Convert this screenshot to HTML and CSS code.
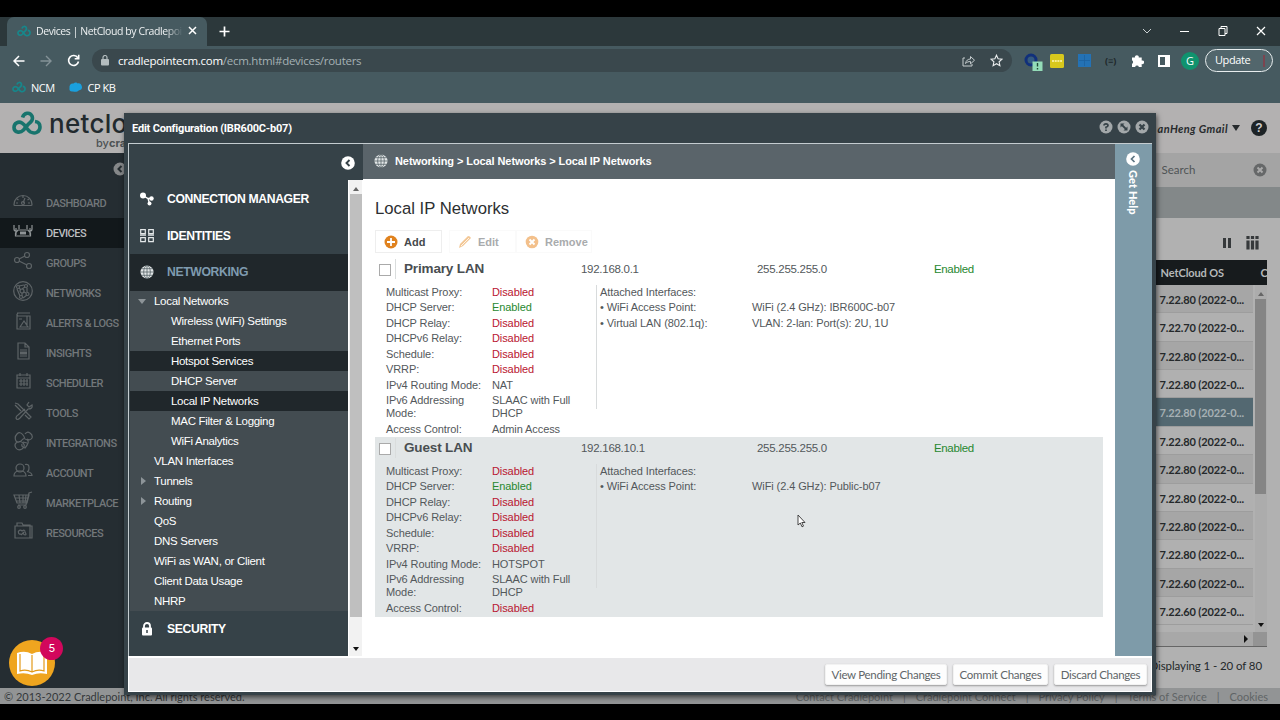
FILE: index.html
```html
<!DOCTYPE html>
<html lang="en">
<head>
    <meta charset="utf-8">
    <title>Devices | NetCloud by Cradlepoint</title>
    <link rel="stylesheet" href="styles.css">
</head>
<body>
    <svg class="defs" width="0" height="0">
        <symbol id="cloud" viewBox="0 0 30 24">
            <path d="M10.500 6.500C12 1.500 18 .8 20 5c1.500 4-1 6-4 8.500L11.500 19C8 22.500 2 21.500 2 16.500c0-4.500 4.500-6.500 8-4.500 4 2.500 5 7 8.500 9 4.500 2.300 9.500 0 9.500-5 0-3-2-5.200-5-5.500" fill="none" stroke="currentColor" stroke-width="3.600"/>
        </symbol>
        <symbol id="globe" viewBox="0 0 14 14">
            <circle cx="7" cy="7" r="6.500" fill="#e2e6e7"/>
            <path d="M7 0v14M.5 7h13M1.500 3.700h11M1.500 10.300h11" stroke="#59656a" stroke-width=".8"/>
            <ellipse cx="7" cy="7" rx="3.300" ry="6.500" fill="none" stroke="#59656a" stroke-width=".8"/>
        </symbol>
    </svg>

    <div class="tabbar">
        <div class="tab">
            <svg class="fav" width="14" height="12"><use href="#cloud"/></svg>
            <span class="tab-title">Devices | NetCloud by Cradlepoi</span>
            <svg width="9" height="9"><path d="M1 1l7 7M8 1l-7 7" stroke="#fff" stroke-width="1.500"/></svg>
        </div>
        <svg class="plus" width="11" height="11"><path d="M5.500 .5v10M.5 5.500h10" stroke="#fff" stroke-width="1.700"/></svg>
        <div class="window-buttons">
            <svg width="10" height="10"><path d="M1 3l4 4 4-4" fill="none" stroke="#c9d0d2"/></svg>
            <svg width="10" height="10"><path d="M0 5.500h9" stroke="#fff"/></svg>
            <svg width="10" height="10"><path d="M1 2.500h6v7h-6zM3 2.500v-2h6v7h-2" fill="none" stroke="#fff"/></svg>
            <svg width="10" height="10"><path d="M1 1l8 8M9 1l-8 8" stroke="#fff" stroke-width="1.200"/></svg>
        </div>
    </div>

    <div class="toolbar">
        <svg width="12" height="12"><path d="M11.500 6H1M6 1L1 6l5 5" fill="none" stroke="#fff" stroke-width="1.500"/></svg>
        <svg width="12" height="12"><path d="M.5 6H11M6 1l5 5-5 5" fill="none" stroke="#849297" stroke-width="1.400"/></svg>
        <svg width="13" height="13"><path d="M10.800 3.700A5 5 0 1 0 11.500 7.500M11.700 .8v4h-4" fill="none" stroke="#fff" stroke-width="1.600"/></svg>
        <div class="address">
            <svg width="8" height="11"><rect y="4" width="8" height="6.500" rx="1" fill="#b4bdbf"/><path d="M2 4.500v-2a2 2 0 0 1 4 0v2" fill="none" stroke="#b4bdbf" stroke-width="1.200"/></svg>
            <span class="url">cradlepointecm.com<span>/ecm.html#devices/routers</span></span>
            <svg class="share" width="14" height="12"><path d="M3 3H1v8h9V9M3.500 8.500c.5-3 2.500-4.500 5-4.500V1.500l4 3.700-4 3.700V6.500c-2 0-3.500.5-5 2z" fill="none" stroke="#c5ccce"/></svg>
            <svg class="star" width="13" height="13"><path d="M6.500 1.200l1.600 3.600 3.900.4-2.900 2.600.8 3.900-3.400-2-3.400 2 .8-3.900L1 5.200l3.900-.4z" fill="none" stroke="#e9eced" stroke-width="1.100"/></svg>
        </div>
        <div class="extensions">
            <svg class="onetab" width="20" height="20"><circle cx="8" cy="9" r="5" fill="none" stroke="#10307c" stroke-width="3"/><circle cx="8" cy="9" r="3" fill="#315a85"/><rect x="9.500" y="10.500" width="10" height="9.500" fill="#93dcb8"/><path d="M14.500 12v3.500M14.500 17v1.400" stroke="#214a36" stroke-width="1.400"/></svg>
            <svg width="14" height="14"><rect width="14" height="14" rx="1.500" fill="#d8c81d"/><path d="M2 7h10" stroke="#fff8b8" stroke-width="1.600" stroke-dasharray="2 .7"/></svg>
            <svg width="13" height="13"><rect width="13" height="13" fill="#2472b5"/><path d="M6.500 1v11M1 6.500h11" stroke="#1d62a0" stroke-width=".8"/></svg>
            <span class="code-ext">(≡)</span>
            <svg width="13" height="13"><path d="M1 3.500h3a1.900 1.900 0 1 1 3.700 0h3v3a1.900 1.900 0 1 1 0 3.600v2.900H7.900a2 2 0 0 0-3.800 0H1V9.900a2 2 0 0 0 0-3.600z" fill="#fff"/></svg>
            <svg width="12" height="12"><rect x="1" y="1" width="10" height="10" fill="none" stroke="#fff" stroke-width="2"/><path d="M8.500 1v10" stroke="#fff" stroke-width="3"/></svg>
            <span class="avatar">G</span>
            <span class="update">Update<i></i></span>
        </div>
    </div>

    <div class="bookmarks">
        <svg class="fav" width="14" height="12"><use href="#cloud"/></svg><span>NCM</span>
        <svg class="salesforce" width="14" height="10"><path d="M4 9.500C1 10 0 8 .5 6 0 3 2 1 4.500 1.500 6 0 8 .5 8.500 1.500c2-.8 4 .5 4.200 2.500 1 2-.5 4.500-2.700 4.200C8.500 10 6 10 4 9.500z" fill="#1aa0de"/></svg><span>CP KB</span>
    </div>

    <div class="app">
        <header>
            <svg class="logo" width="30" height="24"><use href="#cloud"/></svg>
            <div class="brand">netclo<small>by<b>cra</b></small></div>
            <span class="account">anHeng Gmail</span>
            <i class="caret"></i>
            <span class="help">?</span>
        </header>

        <div class="page">
            <nav>
                <svg class="collapse" width="14" height="14"><circle cx="7" cy="7" r="6.500" fill="#858789"/><path d="M8.500 4L5.500 7l3 3" fill="none" stroke="#252c30" stroke-width="2"/></svg>
                <ul>
                    <li><svg width="20" height="20"><path d="M1 13.500a9 9 0 0 1 18 0q0 1-1 1H2q-1 0-1-1zM10 5v2M4 8l1.500 1M16 8l-1.500 1M3 12h2M15 12h2M10 12l2-5"/><circle cx="10" cy="12" r="1.500"/></svg>DASHBOARD</li>
                    <li class="active"><svg width="20" height="20"><path d="M5 9h10l2.500 3v3h-15v-3zM3 14V7M1 4v4q0 2 2 2M17 14V7M19 4v4q0 2-2 2M6 4v4M14 4v4"/><path d="M7 12h6" stroke-width="3"/></svg>DEVICES</li>
                    <li><svg width="20" height="20"><circle cx="4" cy="9" r="2.500"/><circle cx="14" cy="4" r="2.500"/><circle cx="16" cy="15" r="2.500"/><path d="M6 8l6-3M6 10l8 4"/></svg>GROUPS</li>
                    <li><svg width="20" height="20"><circle cx="10" cy="10" r="9.300"/><circle cx="9" cy="10" r="2"/><circle cx="13" cy="5" r="1.500"/><circle cx="14.500" cy="13" r="1.500"/><circle cx="5" cy="6" r="1.500"/><circle cx="8" cy="16" r="1.500"/><path d="M9 8l3-2M11 11l2 1M6 7l2 2M9 12v3M10 17l4-3M6 5l5-1M14 7v4M4 8l3 7"/></svg>NETWORKS</li>
                    <li><svg width="20" height="20"><path d="M4 2h13M5 2q-2 2 0 3h12v13H4V3M14 5v10M7 16l4-6 4 6zM6 8h3"/></svg>ALERTS &amp; LOGS</li>
                    <li><svg width="20" height="20"><path d="M5 2h7l4 4v12H5zM12 2v4h4M7 9h7M7 15h7"/><path d="M7 12h7" stroke-width="3"/></svg>INSIGHTS</li>
                    <li><svg width="20" height="20"><path d="M4 4h13v13H4zM4 7h13M7 2v3M14 2v3M6 10h9M6 13h9M8 8v7M11 8v7M14 8v7"/></svg>SCHEDULER</li>
                    <li><svg width="20" height="20"><path d="M2 2l3 1 10 10M14 12l4 4-2 2-4-4M16 1l-2 3 2 2 3-2q1 4-4 4l-8 9q-3 3-4 0 0-2 2-3l7-6M2 4l6 6"/></svg>TOOLS</li>
                    <li><svg width="20" height="20"><path d="M4 3q3-3 6 1t0 4q-4 5-7 2-2-4 1-7zM3 12q4-3 7 0t-1 6q-4 2-6-1t0-5zM12 8q4 1 3 4t-3 5q-4-1-3-4M12 3q2-3 5-1t2 5q-2 3-5 1M10 11l4 1"/></svg>INTEGRATIONS</li>
                    <li><svg width="20" height="20"><circle cx="7" cy="7" r="4"/><path d="M1 15q0-4 4-5h4q4 1 4 5zM12 3.500q4-1 4 3t-2 4q5 1 5 4h-4"/></svg>ACCOUNT</li>
                    <li><svg width="20" height="20"><path d="M1 4h15l-2 8H4zM19 1l-3 1-3 12H5M2 7h13M3 10h12M6 4l1 8M10 4v8M13 4l-1 8"/><circle cx="6" cy="16" r="1.300"/><circle cx="12" cy="16" r="1.300"/></svg>MARKETPLACE</li>
                    <li><svg width="20" height="20"><path d="M2 5h17v12H2zM4 5V2h5l1 2h7v13"/><path d="M8 13a2 2 0 1 1 1-3q3-2 3 1 2 3 0 3-1 0-2-2M8 14l3-3"/></svg>RESOURCES</li>
                </ul>
                <div class="guide">
                    <svg width="32" height="26"><path d="M1 3q8-3 15 1 7-4 15-1v21q-8-2-15 1-7-3-15-1z" fill="#fff"/><path d="M4 4v17q6-2 12 1 6-3 12-1V4M16 5v17" fill="none" stroke="#e39a19" stroke-width="1.200"/></svg>
                    <span class="badge">5</span>
                </div>
            </nav>

            <main>
                <div class="search">Search<svg width="14" height="14"><circle cx="7" cy="7" r="6.500" fill="#666869"/><path d="M4.500 4.500l5 5M9.500 4.500l-5 5" stroke="#aaa" stroke-width="2"/></svg></div>
                <div class="band"></div>
                <div class="grid-tools">
                    <svg width="10" height="10"><path d="M2.500 0v10M7.500 0v10" stroke="#36393b" stroke-width="3"/></svg>
                    <svg width="13" height="14"><path d="M2 0v3M6.500 0v3M11 0v3M2 4.500v9M6.500 4.500v9M11 4.500v9" stroke="#36393b" stroke-width="3.200"/></svg>
                </div>
                <div class="grid">
                    <div class="grid-head"><span>NetCloud OS</span><span>C</span></div>
                    <div class="grid-body">
                        <div class="rows">
                            <div>7.22.80 (2022-0...</div>
                            <div>7.22.70 (2022-0...</div>
                            <div>7.22.80 (2022-0...</div>
                            <div>7.22.80 (2022-0...</div>
                            <div class="selected">7.22.80 (2022-0...</div>
                            <div>7.22.80 (2022-0...</div>
                            <div>7.22.80 (2022-0...</div>
                            <div>7.22.80 (2022-0...</div>
                            <div>7.22.80 (2022-0...</div>
                            <div>7.22.80 (2022-0...</div>
                            <div>7.22.60 (2022-0...</div>
                            <div>7.22.60 (2022-0...</div>
                        </div>
                        <div class="vscroll"><i class="up"></i><b></b><i class="down"></i></div>
                    </div>
                    <div class="hscroll"><i></i><b></b></div>
                </div>
                <div class="paging">Displaying 1 - 20 of 80</div>
            </main>
        </div>

        <footer>
            <span class="copyright">© 2013-2022 Cradlepoint, Inc. All rights reserved.</span>
            <span>Contact Cradlepoint</span><i>|</i><span>Cradlepoint Connect</span><i>|</i><span>Privacy Policy</span><i>|</i><span>Terms of Service</span><i>|</i><span>Cookies</span>
        </footer>

        <div class="modal">
            <div class="modal-title">
                <span>Edit Configuration (IBR600C-b07)</span>
                <svg width="14" height="14"><circle cx="7" cy="7" r="6.500" fill="#a3a8aa"/><path d="M5 5.500Q5 3.800 7 3.800t2 1.700Q9 6.700 7 7.200v1.300M7 9.500v1.500" fill="none" stroke="#364248" stroke-width="1.700"/></svg>
                <svg width="14" height="14"><circle cx="7" cy="7" r="6.500" fill="#a3a8aa"/><path d="M4.500 4.500l5 5" stroke="#364248" stroke-width="1.800"/><path d="M3.500 7.500v-4h4zM10.500 6.500v4h-4z" fill="#364248"/></svg>
                <svg width="14" height="14"><circle cx="7" cy="7" r="6.500" fill="#a3a8aa"/><path d="M4.500 4.500l5 5M9.500 4.500l-5 5" stroke="#364248" stroke-width="2.200"/></svg>
            </div>

            <div class="modal-body">
                <div class="menu">
                    <div class="menu-top"><svg width="14" height="14"><circle cx="7" cy="7" r="6.800" fill="#fff"/><path d="M8.500 4L5.500 7l3 3" fill="none" stroke="#364248" stroke-width="1.900"/></svg></div>
                    <div class="menu-scroll">
                        <div class="menu-list">
                            <div class="group"><svg width="14" height="14"><circle cx="3" cy="3.500" r="3" fill="#fff"/><circle cx="11.500" cy="6.500" r="2.200" fill="#fff"/><circle cx="9.500" cy="11.500" r="2" fill="#fff"/><path d="M3 3.500l5 3h3.500M8 6.500l1.500 5" fill="none" stroke="#fff" stroke-width="1.400"/></svg>CONNECTION MANAGER</div>
                            <div class="group"><svg width="14" height="14"><path d="M.7.700h4.600v4H.7zM8.700.700h4.600v4H8.700zM.7 8.700h4.600v4H.7zM8.700 8.700h4.600v4H8.700zM0 6.200h6M8 6.200h6" fill="none" stroke="#e4e8e9" stroke-width="1.200"/></svg>IDENTITIES</div>
                            <div class="group open"><svg width="14" height="14"><use href="#globe"/></svg>NETWORKING</div>
                            <ul>
                                <li class="expanded">Local Networks</li>
                                <li class="sub">Wireless (WiFi) Settings</li>
                                <li class="sub">Ethernet Ports</li>
                                <li class="sub current">Hotspot Services</li>
                                <li class="sub">DHCP Server</li>
                                <li class="sub current">Local IP Networks</li>
                                <li class="sub">MAC Filter &amp; Logging</li>
                                <li class="sub">WiFi Analytics</li>
                                <li>VLAN Interfaces</li>
                                <li class="collapsed">Tunnels</li>
                                <li class="collapsed">Routing</li>
                                <li>QoS</li>
                                <li>DNS Servers</li>
                                <li>WiFi as WAN, or Client</li>
                                <li>Client Data Usage</li>
                                <li>NHRP</li>
                            </ul>
                            <div class="group"><svg width="14" height="14"><rect x="2" y="5.500" width="10" height="8" rx="1" fill="#fff"/><path d="M4 6V4a3 3 0 0 1 6 0v2" fill="none" stroke="#fff" stroke-width="1.800"/><path d="M7 8v3" stroke="#364248" stroke-width="1.500"/></svg>SECURITY</div>
                        </div>
                        <div class="menu-bar"><i class="up"></i><b></b><i class="down"></i></div>
                    </div>
                </div>

                <div class="content">
                    <div class="breadcrumb"><svg width="14" height="14"><use href="#globe"/></svg>Networking &gt; Local Networks &gt; Local IP Networks</div>
                    <div class="panel">
                        <h1>Local IP Networks</h1>
                        <div class="actions">
                            <div class="action add"><svg width="14" height="14"><circle cx="7" cy="7" r="6.500" fill="#e0821e"/><path d="M7 3v8M3 7h8" stroke="#fff" stroke-width="1.800"/></svg>Add</div>
                            <div class="action edit"><svg width="14" height="14"><path d="M1 13l1-4 8-8q2 0 3 2l-8 8z" fill="#f3c795"/><path d="M3 11l8-8" stroke="#fff" stroke-width=".8"/></svg>Edit</div>
                            <div class="action remove"><svg width="14" height="14"><circle cx="7" cy="7" r="6.300" fill="#f3c08b"/><path d="M4.500 4.500l5 5M9.500 4.500l-5 5" stroke="#fff" stroke-width="1.900"/></svg>Remove</div>
                        </div>

                        <div class="network">
                            <div class="network-head"><input type="checkbox"><strong>Primary LAN</strong><span>192.168.0.1</span><span>255.255.255.0</span><span class="on">Enabled</span></div>
                            <div class="details">
                                <dl>
                                    <dt>Multicast Proxy:</dt><dd class="off">Disabled</dd>
                                    <dt>DHCP Server:</dt><dd class="on">Enabled</dd>
                                    <dt>DHCP Relay:</dt><dd class="off">Disabled</dd>
                                    <dt>DHCPv6 Relay:</dt><dd class="off">Disabled</dd>
                                    <dt>Schedule:</dt><dd class="off">Disabled</dd>
                                    <dt>VRRP:</dt><dd class="off">Disabled</dd>
                                    <dt>IPv4 Routing Mode:</dt><dd>NAT</dd>
                                    <dt>IPv6 Addressing<br>Mode:</dt><dd>SLAAC with Full<br>DHCP</dd>
                                    <dt>Access Control:</dt><dd>Admin Access</dd>
                                </dl>
                                <dl class="attached">
                                    <dt>Attached Interfaces:</dt><dd></dd>
                                    <dt>• WiFi Access Point:</dt><dd>WiFi (2.4 GHz): IBR600C-b07</dd>
                                    <dt>• Virtual LAN (802.1q):</dt><dd>VLAN: 2-lan: Port(s): 2U, 1U</dd>
                                </dl>
                            </div>
                        </div>

                        <div class="network alt">
                            <div class="network-head"><input type="checkbox"><strong>Guest LAN</strong><span>192.168.10.1</span><span>255.255.255.0</span><span class="on">Enabled</span></div>
                            <div class="details">
                                <dl>
                                    <dt>Multicast Proxy:</dt><dd class="off">Disabled</dd>
                                    <dt>DHCP Server:</dt><dd class="on">Enabled</dd>
                                    <dt>DHCP Relay:</dt><dd class="off">Disabled</dd>
                                    <dt>DHCPv6 Relay:</dt><dd class="off">Disabled</dd>
                                    <dt>Schedule:</dt><dd class="off">Disabled</dd>
                                    <dt>VRRP:</dt><dd class="off">Disabled</dd>
                                    <dt>IPv4 Routing Mode:</dt><dd>HOTSPOT</dd>
                                    <dt>IPv6 Addressing<br>Mode:</dt><dd>SLAAC with Full<br>DHCP</dd>
                                    <dt>Access Control:</dt><dd class="off">Disabled</dd>
                                </dl>
                                <dl class="attached">
                                    <dt>Attached Interfaces:</dt><dd></dd>
                                    <dt>• WiFi Access Point:</dt><dd>WiFi (2.4 GHz): Public-b07</dd>
                                </dl>
                            </div>
                        </div>
                    </div>
                </div>

                <div class="get-help"><svg width="14" height="14"><circle cx="7" cy="7" r="6.800" fill="#fff"/><path d="M8.500 4L5.500 7l3 3" fill="none" stroke="#5c7482" stroke-width="1.700"/></svg><span>Get Help</span></div>
            </div>

            <div class="modal-footer">
                <button class="b1">View Pending Changes</button>
                <button class="b2">Commit Changes</button>
                <button class="b3">Discard Changes</button>
            </div>
        </div>
    </div>

    <svg class="cursor" width="9" height="14"><path d="M1 1v10l2.300-2 1.700 3.800 1.500-.7-1.700-3.600H8z" fill="#fff" stroke="#333" stroke-width=".9"/></svg>
</body>
</html>
```
FILE: styles.css
```css
* {
    box-sizing: border-box;
}

body {
    margin: 0;
    padding: 17px 0 16px;
    width: 1280px;
    height: 720px;
    overflow: hidden;
    background: #000;
    display: flex;
    flex-direction: column;
    font-family: "Liberation Sans", Arial, sans-serif;
    white-space: nowrap;
}

svg {
    flex: none;
    display: block;
}

ul, dl, dd {
    margin: 0;
    padding: 0;
    list-style: none;
}

.defs {
    position: absolute;
}

/* browser */

.tabbar {
    height: 29px;
    flex: none;
    background: #2c383b;
    display: flex;
    align-items: center;
    padding: 0 0 1px 7px;
    font: 10.500px "Open Sans", sans-serif;
    color: #eef1f2;
}

.tab {
    width: 200px;
    height: 29px;
    margin-bottom: -1px;
    background: #465a60;
    border-radius: 7px 7px 0 0;
    display: flex;
    align-items: center;
    padding: 0 0 2px 10px;
}

.fav {
    color: #17878b;
}

.tab-title {
    width: 147px;
    margin: 0 5px 0 5px;
    letter-spacing: -0.42px;
    mask-image: linear-gradient(90deg, #000 88%, transparent);
}

.plus {
    margin-left: 12px;
}

.window-buttons {
    margin-left: auto;
    padding-right: 14px;
    display: flex;
    gap: 28px;
}

.toolbar {
    height: 30px;
    flex: none;
    background: #465a60;
    display: flex;
    align-items: center;
    gap: 15px;
    padding: 0 0 1px 12px;
}

.toolbar > svg {
    margin-left: 1px;
    margin-right: -1px;
}

.address {
    width: 920px;
    height: 23px;
    margin-left: -2px;
    border-radius: 12px;
    background: #3a484d;
    display: flex;
    align-items: center;
    padding: 0 9px 0 9px;
}

.url {
    flex: 1;
    margin-left: 9px;
    font: 11.500px "Open Sans", sans-serif;
    letter-spacing: -0.27px;
    color: #fff;
}

.url span {
    color: #a5b1b4;
}

.share {
    margin-right: 14px;
}

.extensions {
    display: flex;
    align-items: center;
    gap: 14px;
    margin-left: -4px;
    font: 11px "Open Sans", sans-serif;
}

.onetab {
    margin-right: -7px;
}

.code-ext {
    width: 12px;
    font-size: 9px;
    font-weight: bold;
    color: #1d2629;
}

.avatar {
    width: 18px;
    height: 18px;
    line-height: 18px;
    margin: 0 -8px 0 -3px;
    border-radius: 50%;
    background: #10936e;
    color: #fff;
    text-align: center;
}

.update {
    width: 68px;
    height: 23px;
    line-height: 20px;
    padding-left: 9px;
    border: 1px solid #e8edee;
    border-radius: 12px;
    background: #52666c;
    color: #fff;
    letter-spacing: -0.4px;
    display: flex;
    gap: 13px;
}

.update i {
    width: 2px;
    height: 12px;
    margin-top: 5px;
    background: #7c4550;
}

.bookmarks {
    height: 27px;
    flex: none;
    background: #465a60;
    display: flex;
    align-items: center;
    padding: 0 0 5px 12px;
    font: 11px "Open Sans", sans-serif;
    letter-spacing: -0.5px;
    color: #fff;
}

.bookmarks span {
    margin-left: 5px;
}

.salesforce {
    margin-left: 14px;
}

/* application behind the dialog */

.app {
    flex: 1;
    min-height: 0;
    position: relative;
    display: flex;
    flex-direction: column;
    background: #b1b1b1;
}

header {
    height: 50px;
    flex: none;
    display: flex;
    align-items: center;
    background: #b3b1b1;
    padding-right: 13px;
}

.logo {
    margin-left: 12px;
    margin-top: -10px;
    color: #18746d;
}

.brand {
    margin: 1px 0 0 7px;
    font: 500 26px/29px Inter, sans-serif;
    letter-spacing: 0.3px;
    color: #222a2e;
    display: flex;
    flex-direction: column;
}

.brand small {
    font-size: 11px;
    line-height: 10px;
    letter-spacing: 0;
    margin-left: 47px;
    color: #4d5254;
}

.account {
    margin-left: auto;
    font: italic bold 11px Lato, sans-serif;
    letter-spacing: 0.4px;
    color: #272b2d;
}

.caret {
    margin: 0 11px 0 4px;
    border: 4px solid transparent;
    border-top: 6px solid #272b2d;
    border-bottom: 0;
}

.help {
    width: 16px;
    height: 16px;
    border-radius: 50%;
    background: #1d2326;
    color: #ccc;
    text-align: center;
    font: bold 12px/16px "Liberation Sans", sans-serif;
}

.page {
    flex: 1;
    min-height: 0;
    display: flex;
}

nav {
    width: 128px;
    background: #252d32;
    position: relative;
    font: 500 11px Roboto, sans-serif;
    letter-spacing: -0.5px;
    color: #72777a;
}

.collapse {
    margin: 9px 0 12px 113px;
}

nav li {
    height: 30px;
    display: flex;
    align-items: center;
    gap: 13px;
    padding-left: 13px;
}

nav li svg {
    fill: none;
    stroke: #5e6467;
    stroke-width: 1.200;
    margin-top: -4px;
}

nav li.active {
    background: #12181b;
    color: #bcbfc0;
}

nav li.active svg {
    stroke: #8f9496;
}

.guide {
    position: absolute;
    left: 9px;
    bottom: 2px;
    width: 46px;
    height: 46px;
    border-radius: 50%;
    background: #efa51f;
    display: flex;
    align-items: center;
    justify-content: center;
}

.badge {
    position: absolute;
    left: 31px;
    top: -3px;
    width: 23px;
    height: 23px;
    border-radius: 50%;
    background: #d2075c;
    color: #fff;
    font: 11px/22px Inter, sans-serif;
    text-align: center;
}

main {
    flex: 1;
    padding-left: 1022px;
    font-family: Lato, sans-serif;
    color: #25292b;
}

.search {
    height: 34px;
    background: #a4a4a4;
    margin-left: 6px;
    padding: 0 13px 1px 6px;
    display: flex;
    align-items: center;
    justify-content: space-between;
    font-size: 11.500px;
    color: #505456;
}

.band {
    height: 31px;
    background: #838889;
}

.grid-tools {
    height: 42px;
    display: flex;
    align-items: center;
    justify-content: flex-end;
    gap: 14px;
    padding: 8px 21px 0 0;
}

.grid {
    width: 117px;
    border-bottom: 1px solid #666;
}

.grid-head {
    height: 25px;
    background: #171b1d;
    color: #b5b8b9;
    font-size: 11px;
    font-weight: bold;
    letter-spacing: -0.1px;
    display: flex;
    justify-content: space-between;
    align-items: center;
    padding: 0 0 1px 11px;
    overflow: hidden;
}

.grid-head span:last-child {
    width: 6px;
}

.grid-body {
    display: flex;
    justify-content: space-between;
    height: 347px;
}

.rows {
    width: 103px;
}

.rows div {
    height: 28.360px;
    line-height: 29px;
    padding-left: 10px;
    border-bottom: 1px solid #9d9d9d;
    background: #b0b0b0;
    font-size: 11px;
    font-weight: bold;
    letter-spacing: -0.13px;
}

.rows div:nth-child(odd) {
    background: #a6a6a6;
}

.rows div.selected {
    background: #536871;
    color: #a6b0b4;
}

.vscroll {
    width: 12px;
    background: #acacac;
    display: flex;
    flex-direction: column;
    align-items: center;
}

.up {
    margin: 7px 0 3px;
    border: 3px solid transparent;
    border-bottom: 4px solid #666;
    border-top: 0;
}

.down {
    margin: auto 0 5px;
    border: 3px solid transparent;
    border-top: 4px solid #111;
    border-bottom: 0;
}

.vscroll b {
    width: 11px;
    height: 195px;
    background: #858585;
}

.hscroll {
    height: 14px;
    background: #a8a8a8;
    display: flex;
    justify-content: flex-end;
    align-items: center;
}

.hscroll i {
    border: 4px solid transparent;
    border-left: 4px solid #111;
    border-right: 0;
    margin-right: 5px;
}

.hscroll b {
    width: 14px;
    height: 14px;
    background: #949494;
}

.paging {
    margin-top: 12px;
    padding-right: 18px;
    text-align: right;
    font-size: 11.500px;
    letter-spacing: -0.1px;
}

footer {
    height: 16px;
    flex: none;
    display: flex;
    align-items: center;
    gap: 10px;
    padding: 1px 12px 0 4px;
    background: #929495;
    font: 11px Lato, sans-serif;
    color: #606466;
}

footer i {
    font-style: normal;
}

.copyright {
    margin-right: auto;
    color: #34383a;
}

/* edit configuration dialog */

.modal {
    position: absolute;
    left: 124px;
    top: 10px;
    width: 1032px;
    height: 582px;
    padding: 0 4px 3px;
    background: #364248;
    box-shadow: 1px 2px 5px rgba(0, 0, 0, 0.6);
    display: flex;
    flex-direction: column;
}

.modal-title {
    height: 30px;
    flex: none;
    display: flex;
    align-items: center;
    gap: 4px;
    padding: 0 3px 2px 4px;
    color: #fff;
    font: bold 11px Roboto, sans-serif;
    letter-spacing: -0.2px;
}

.modal-title span {
    margin: 2px auto 0 0;
}

.modal-body {
    height: 513px;
    flex: none;
    display: flex;
    border: solid #c4ccd0;
    border-width: 1px 2px 0 1px;
    padding-left: 1px;
    background: #364248;
}

.menu {
    width: 233px;
    display: flex;
    flex-direction: column;
}

.menu-top {
    height: 36px;
    flex: none;
    padding: 12px 0 0 211px;
}

.menu-scroll {
    flex: 1;
    min-height: 0;
    display: flex;
}

.menu-list {
    width: 218px;
    overflow: hidden;
    color: #fff;
}

.group {
    height: 37px;
    display: flex;
    align-items: center;
    gap: 13px;
    padding: 1px 0 0 10px;
    font-size: 12.200px;
    font-weight: bold;
    letter-spacing: -0.35px;
}

.group.open {
    background: #20272b;
    color: #7f9bb0;
    padding: 0 0 1px 10px;
}

.menu-list ul {
    background: #434c51;
    margin-bottom: -1px;
}

.menu-list li {
    height: 20px;
    line-height: 20px;
    padding-left: 24px;
    font-size: 11.500px;
    letter-spacing: -0.3px;
    display: flex;
    align-items: center;
}

.menu-list li.sub {
    padding-left: 41px;
}

.menu-list li.current {
    background: #20272b;
}

.menu-list li.expanded::before {
    content: "";
    margin: 0 8px 0 -16px;
    border: 4px solid transparent;
    border-top: 5px solid #8d9498;
    border-bottom: 0;
}

.menu-list li.collapsed::before {
    content: "";
    margin: 0 8px 0 -13px;
    border: 4px solid transparent;
    border-left: 5px solid #8d9498;
    border-right: 0;
}

.menu-bar {
    width: 15px;
    border: solid #fff;
    border-width: 0 1px;
    background: #f2f2f2;
    display: flex;
    flex-direction: column;
    align-items: center;
}

.menu-bar b {
    width: 12px;
    height: 423px;
    background: #bfbfbf;
}

.content {
    flex: 1;
    background: #fff;
}

.breadcrumb {
    height: 35px;
    background: #5a646a;
    color: #fff;
    display: flex;
    align-items: center;
    gap: 7px;
    padding: 0 0 1px 11px;
    font-size: 11px;
    font-weight: bold;
    letter-spacing: -0.09px;
}

.panel {
    padding: 0 12px;
    color: #53585b;
}

h1 {
    margin: 19px 0 0;
    height: 32px;
    font-size: 16.700px;
    line-height: 22px;
    font-weight: normal;
    color: #2c2f31;
}

.actions {
    height: 28px;
    display: flex;
}

.action {
    height: 23px;
    display: flex;
    align-items: center;
    gap: 6px;
    padding-left: 8px;
    font-size: 11px;
    font-weight: bold;
    color: #a9abad;
    border: 1px solid #fafafa;
}

.action.add {
    width: 67px;
    color: #45494c;
    border-color: #eee;
}

.action.edit {
    width: 67px;
    margin-left: 7px;
}

.action.remove {
    width: 76px;
}

.network {
    height: 179px;
    width: 728px;
}

.network.alt {
    height: 180px;
    background: #e2e6e7;
}

.network-head {
    height: 26px;
    display: grid;
    grid-template-columns: 20px 186px 176px 177px 1fr;
    align-items: center;
    padding: 0 0 4px 0;
    font-size: 11.500px;
    letter-spacing: -0.28px;
}

.network-head .on {
    letter-spacing: -0.35px;
}

.network-head input {
    appearance: none;
    width: 12px;
    height: 12px;
    margin: 1px 0 0 4px;
    border: 1px solid #aaa;
    background: #fff;
}

.network-head strong {
    height: 20px;
    border-left: 1px solid #dadddd;
    padding-left: 8px;
    font-size: 13.500px;
    letter-spacing: -0.15px;
    line-height: 19px;
    color: #494e51;
}

.details {
    display: flex;
    padding: 0.5px 0 0 11px;
    font-size: 11px;
    line-height: 13px;
    letter-spacing: -0.09px;
}

dl {
    display: grid;
    grid-template-columns: 106px 105px;
    grid-auto-rows: min-content;
}

dt, dd {
    padding: 1.250px 0;
    min-height: 15.500px;
}

.attached {
    height: 124px;
    margin-left: -1px;
    grid-template-columns: 152px 200px;
    border-left: 1px solid #d8dbdc;
    padding-left: 3px;
}

.on {
    color: #27882f;
}

.off {
    color: #b91530;
}

.get-help {
    width: 37px;
    flex: none;
    background: #7e9ba9;
    padding: 8px 1px 0 0;
    display: flex;
    flex-direction: column;
    align-items: center;
    gap: 4px;
    color: #fff;
    font: 900 11px Lato, sans-serif;
    letter-spacing: 0.1px;
}

.get-help span {
    writing-mode: vertical-rl;
}

.modal-footer {
    flex: 1;
    border: 1px solid #fff;
    border-top-width: 2px;
    background: #e8e8ea;
    display: flex;
    justify-content: flex-end;
    align-items: center;
    gap: 6px;
    padding: 0 4px 0 0;
}

button {
    height: 21px;
    padding: 0;
    border: 1px solid #f2f2f2;
    border-radius: 2px;
    background: #fdfdfd;
    box-shadow: 0 1px 2px rgba(0, 0, 0, 0.35);
    font: 11.500px Lato, sans-serif;
    letter-spacing: -0.3px;
    color: #606568;
}

.b1 {
    width: 122px;
}

.b2 {
    width: 95px;
}

.b3 {
    width: 93px;
}

.cursor {
    position: absolute;
    left: 797px;
    top: 514px;
}
```
